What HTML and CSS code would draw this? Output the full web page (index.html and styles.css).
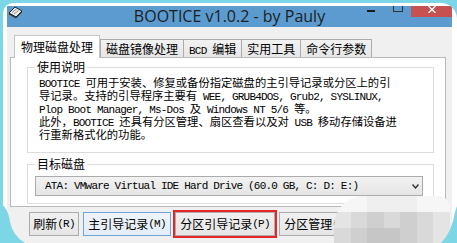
FILE: index.html
```html
<!DOCTYPE html>
<html lang="zh-CN">
<head>
<meta charset="utf-8">
<title>BOOTICE v1.0.2 - by Pauly</title>
<link rel="stylesheet" href="styles.css">
</head>
<body>
<div class="frame">
  <div class="window">
    <div class="titlebar">
      <div class="ticon">
        <svg width="15" height="13" viewBox="0 0 15 13">
          <path d="M1 7 L1 8.5 L8 12.5 L14 6.5 L14 5 Z" fill="#3a3a3a"/>
          <path d="M1 7 L7 1 L14 5 L8 11 Z" fill="#ececec" stroke="#1e1e1e" stroke-width="1"/>
          <path d="M4 6.5 L8.5 3 M6 8 L10.5 4.5" stroke="#8a8a8a" stroke-width="1"/>
        </svg>
      </div>
      <div class="ttitle">BOOTICE v1.0.2 - by Pauly</div>
      <div class="tctrls">
        <div class="tmin"></div>
        <div class="tmax"></div>
        <div class="tclose">
          <svg width="8" height="7" viewBox="0 0 8 7"><path d="M0.5 0 L7.5 7 M7.5 0 L0.5 7" stroke="#fff" stroke-width="1.4"/></svg>
        </div>
      </div>
    </div>
    <div class="client">
      <div class="tabs">
        <div class="tab active">物理磁盘处理</div>
        <div class="tab">磁盘镜像处理</div>
        <div class="tab join"><span class="sl">BCD </span>编辑</div>
        <div class="tab join">实用工具</div>
        <div class="tab join">命令行参数</div>
      </div>
      <div class="panel">
        <fieldset class="group g1">
          <legend>使用说明</legend>
          <div class="desc">
            <div class="line"><span class="sl">BOOTICE </span>可用于安装、修复或备份指定磁盘的主引导记录或分区上的引</div>
            <div class="line">导记录。支持的引导程序主要有<span class="sl"> WEE, GRUB4DOS, Grub2, SYSLINUX,</span></div>
            <div class="line"><span class="sl">Plop Boot Manager, Ms-Dos </span>及<span class="sl"> Windows NT 5/6 </span>等。</div>
            <div class="line">此外，<span class="sl">BOOTICE </span>还具有分区管理、扇区查看以及对<span class="sl"> USB </span>移动存储设备进</div>
            <div class="line">行重新格式化的功能。</div>
          </div>
        </fieldset>
        <fieldset class="group g2">
          <legend>目标磁盘</legend>
          <div class="combo">
            <span class="sl">ATA: VMware Virtual IDE Hard Drive (60.0 GB, C: D: E:)</span>
            <svg class="chev" width="7" height="5" viewBox="0 0 7 5"><path d="M0.5 0.5 L3.5 4 L6.5 0.5" fill="none" stroke="#333" stroke-width="1.4"/></svg>
          </div>
        </fieldset>
      </div>
      <div class="buttons">
        <div class="btn b1">刷新<span class="sl">(R)</span></div>
        <div class="btn b2">主引导记录<span class="sl">(M)</span></div>
        <div class="btn b3">分区引导记录<span class="sl">(P)</span></div>
        <div class="btn b4">分区管理<span class="sl">(A)</span></div>
      </div>
    </div>
  </div>
</div>
<div class="mosaic">
  <i class="m0"></i><i class="m0"></i><i class="m1"></i><i class="m1"></i><i class="m1"></i><i class="m0"></i><i class="m0"></i>
  <i class="m2"></i><i class="m3"></i><i class="m4"></i><i class="m3"></i><i class="m4"></i><i class="m3"></i><i class="m2"></i>
  <i class="m3"></i><i class="m4"></i><i class="m5"></i><i class="m5"></i><i class="m4"></i><i class="m3"></i><i class="m2"></i>
</div>
<svg class="edges" width="457" height="243" viewBox="0 0 457 243">
  <path d="M0 204 L4 206 Q9 213 10 222 Q13 236 25 243 L0 243 Z" fill="#7dd6e6"/>
  <path d="M457 206 L455 212 Q452 232 441 243 L457 243 Z" fill="#7dd6e6"/>
</svg>
</body>
</html>
```

FILE: styles.css
```css
html, body {
  margin: 0;
  padding: 0;
}
body {
  background: #7dd6e6;
  width: 457px;
  height: 243px;
  overflow: hidden;
  position: relative;
  font-family: "Noto Sans CJK SC", "Noto Sans", sans-serif;
  color: #000;
}
.frame {
  margin: 3px 0 0 3px;
  background: #fff;
  border-radius: 10px 16px 0 0;
  padding: 3px 5px 0 4px;
  height: 240px;
  box-sizing: border-box;
  overflow: hidden;
}
.window {
  background: #f0f0f0;
  height: 237px;
  overflow: hidden;
}
.titlebar {
  height: 21px;
  background: #5b9bcf;
  display: grid;
  grid-template-columns: 1fr auto 1fr;
  align-items: center;
}
.ticon {
  align-self: start;
  margin-left: 1px;
  height: 13px;
}
.ticon svg { display: block; }
.ttitle {
  font-family: "Open Sans", "Noto Sans", sans-serif;
  font-size: 16px;
  line-height: 21px;
  color: #1e1e1e;
  white-space: nowrap;
}
.tctrls {
  justify-self: end;
  align-self: stretch;
  display: flex;
  align-items: flex-start;
}
.tmin {
  width: 8px;
  height: 2px;
  background: #1a1a1a;
  margin-top: 4px;
  margin-right: 18px;
}
.tmax {
  width: 10px;
  height: 6px;
  box-sizing: border-box;
  border: 1px solid #333;
  border-top: none;
  margin-right: 8px;
}
.tclose {
  width: 41px;
  height: 11px;
  background: #c75050;
  display: flex;
  justify-content: center;
  align-items: flex-end;
  padding-bottom: 4px;
  box-sizing: border-box;
  overflow: hidden;
}
.tclose svg { display: block; }
.client {
  padding: 8px 6px 0 3px;
}
.tabs {
  display: flex;
  align-items: flex-end;
  height: 22px;
  padding-left: 4px;
  position: relative;
  z-index: 1;
}
.tab {
  height: 18px;
  box-sizing: border-box;
  border: 1px solid #acacac;
  border-bottom: none;
  background: linear-gradient(#f2f2f2, #e6e6e6);
  padding: 0 5px;
  font-size: 12px;
  line-height: 17px;
  white-space: nowrap;
}
.tab.join { margin-left: -1px; }
.tab.active {
  height: 23px;
  margin-bottom: -1px;
  background: #fff;
  border-color: #c6c6c6;
  padding: 0 6px;
  line-height: 22px;
}
.sl {
  font-family: "Liberation Mono", "DejaVu Sans Mono", monospace;
  font-size: 11px;
  letter-spacing: -0.8px;
}
.panel {
  background: #fff;
  border: 1px solid #b9b9b9;
  padding: 0 11px 2px 16px;
}
.group {
  margin: 0;
  padding: 0;
  border: 1px solid #dcdcdc;
  min-width: 0;
}
.group legend {
  font-size: 12px;
  line-height: 12px;
  padding: 0 2px;
  margin-left: 7px;
}
.g1 { margin-top: 3px; }
.g2 { margin-top: 5px; }
.desc {
  margin: 3px 0 11px 11px;
  font-size: 11.3px;
  white-space: nowrap;
}
.line {
  height: 13px;
  line-height: 13px;
}
.combo {
  margin: 6px 10px 7px 7px;
  height: 20px;
  box-sizing: border-box;
  border: 1px solid #acacac;
  background: linear-gradient(#f2f2f2, #e5e5e5);
  display: flex;
  align-items: center;
  justify-content: space-between;
  padding: 0 3px 0 9px;
  white-space: nowrap;
}
.chev { display: block; }
.buttons {
  display: flex;
  gap: 4px;
  margin-top: 5px;
  padding-left: 19px;
}
.btn {
  height: 24px;
  box-sizing: border-box;
  border: 1px solid #acacac;
  background: linear-gradient(#f0f0f0, #e5e5e5);
  font-size: 12px;
  line-height: 22px;
  display: flex;
  justify-content: center;
  white-space: nowrap;
}
.b1 { width: 50px; }
.b2 {
  width: 88px;
  border-color: #6ea6dc;
  background: linear-gradient(#eef4fa, #e3edf7);
}
.b3 {
  width: 100px;
  outline: 2px solid #e3262a;
}
.b4 { width: 76px; }
.mosaic {
  position: absolute;
  left: 334px;
  top: 196px;
  width: 116px;
  height: 47px;
  border-radius: 30px 12px 0 0;
  overflow: hidden;
  display: grid;
  grid-template-columns: repeat(7, 1fr);
  grid-template-rows: 16px 16px 15px;
}
.mosaic i { display: block; }
.m0 { background: #f6f6f6; }
.m1 { background: #efefef; }
.m2 { background: #e4e4e4; }
.m3 { background: #d9d9d9; }
.m4 { background: #cfcfcf; }
.m5 { background: #c6c6c6; }
.edges {
  position: absolute;
  left: 0;
  top: 0;
  pointer-events: none;
}
```
